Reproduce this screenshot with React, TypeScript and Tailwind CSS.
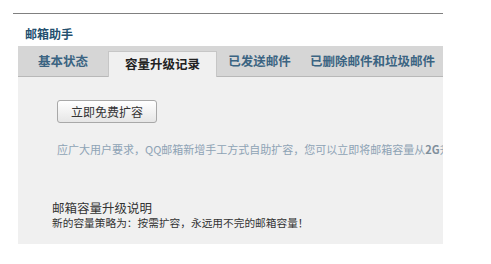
const font = { fontFamily: '"Noto Sans CJK SC", "Noto Sans", sans-serif' };

const tabs = [
  { label: '基本状态', width: 'w-[90px]', active: false },
  { label: '容量升级记录', width: 'w-[109px]', active: true },
  { label: '已发送邮件', width: 'w-[85px]', active: false },
  { label: '已删除邮件和垃圾邮件', width: 'w-[141px]', active: false },
];

export default function App() {
  return (
    <div className="min-h-screen bg-white pt-[13px] pl-[13px]" style={font}>
      <div className="w-[430px] border-t border-[#808080]">
        {/* Title */}
        <div className="pl-[12px] pt-[12px] mb-[4px] text-[12px] leading-[16px] font-bold text-[#24506f]">
          邮箱助手
        </div>

        <div className="ml-[5px] w-[425px]">
          {/* Tabs */}
          <div className="h-[31px] bg-[#d6d6d6] border-b border-[#b8b8b8] flex items-end">
            {tabs.map((tab) =>
              tab.active ? (
                <div
                  key={tab.label}
                  className={`${tab.width} h-[26px] -mb-[1px] bg-[#f0f0f0] border-t border-l border-r border-[#c6c6c6] flex items-center justify-center text-[12.5px] font-bold text-[#222]`}
                >
                  {tab.label}
                </div>
              ) : (
                <div
                  key={tab.label}
                  className={`${tab.width} h-[30px] flex items-center justify-center text-[12.5px] font-bold text-[#3b6482]`}
                >
                  {tab.label}
                </div>
              )
            )}
          </div>

          {/* Content */}
          <div className="bg-[#f0f0f0] pt-[23px] pb-[14px] overflow-hidden">
            <button className="ml-[39px] w-[100px] h-[23px] rounded-[3px] border border-[#a8a8a8] bg-gradient-to-b from-white to-[#e6e6e6] text-[12px] text-[#333] flex items-center justify-center">
              立即免费扩容
            </button>
            <div className="ml-[39px] mt-[18px] text-[11px] leading-[16px] text-[#8ea3b5] whitespace-nowrap">
              应广大用户要求，QQ邮箱新增手工方式自助扩容，您可以立即将邮箱容量从
              <span className="font-bold text-[#7f8f9c]">2G</span>升级到
              <span className="font-bold text-[#7f8f9c]">4G</span>
            </div>
            <div className="ml-[34px] mt-[43px] text-[12.5px] leading-[15px] text-[#333]">
              邮箱容量升级说明
            </div>
            <div className="ml-[34px] mt-[1px] text-[10.7px] leading-[14px] text-[#333]">
              新的容量策略为：按需扩容，永远用不完的邮箱容量！
            </div>
          </div>
        </div>
      </div>
    </div>
  );
}
